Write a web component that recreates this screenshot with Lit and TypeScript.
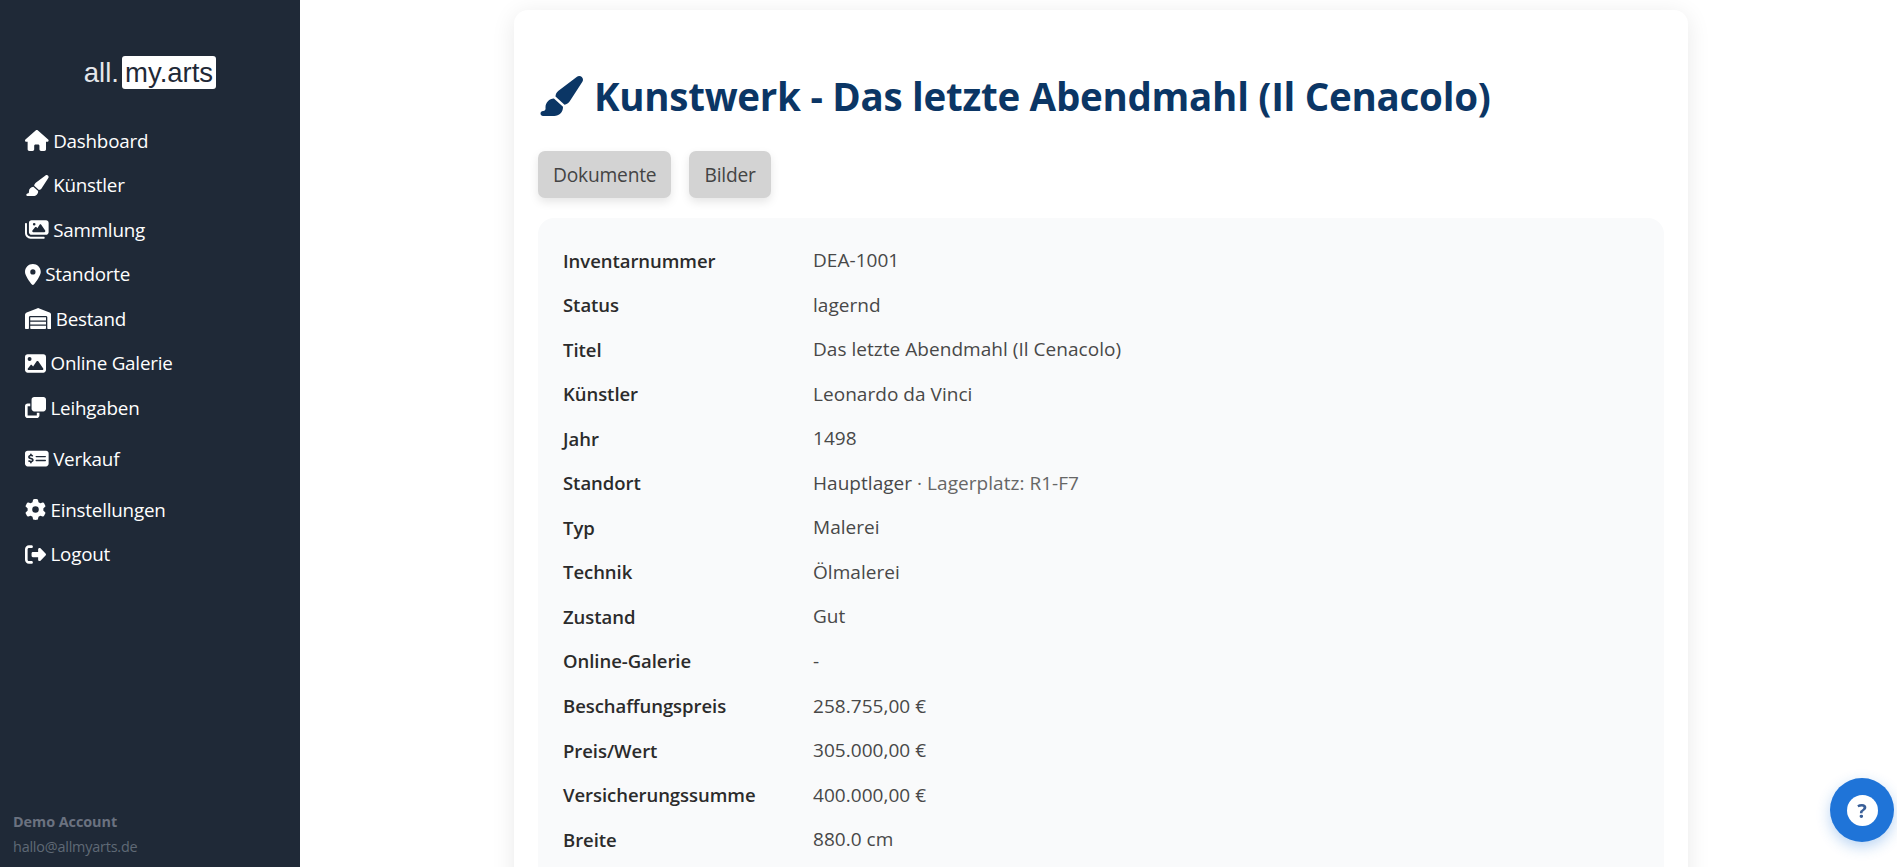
import { LitElement, html, css, svg } from "lit";
import { customElement } from "lit/decorators.js";

const I: Record<string, [number, string]> = {
  home: [576, "M575.8 255.5c0 18-15 32.1-32 32.1h-32l.7 160.2c0 2.7-.2 5.4-.5 8.1V472c0 22.1-17.9 40-40 40H456c-1.1 0-2.2 0-3.3-.1c-1.4 .1-2.8 .1-4.2 .1H416 392c-22.1 0-40-17.9-40-40V448 384c0-17.7-14.3-32-32-32H256c-17.7 0-32 14.3-32 32v64 24c0 22.1-17.9 40-40 40H160 128.1c-1.5 0-3-.1-4.5-.2c-1.2 .1-2.4 .2-3.6 .2H104c-22.1 0-40-17.9-40-40V360c0-.9 0-1.9 .1-2.8V287.6H32c-18 0-32-14-32-32.1c0-9 3-17 10-24L266.4 8c7-7 15-8 22-8s15 2 21 7L564.8 231.5c8 7 12 15 11 24z"],
  brush: [576, "M339.3 367.1c27.3-3.9 51.9-19.4 67.2-42.9L568.2 74.1c12.6-19.5 9.4-45.3-7.6-61.2S517.7-4.4 499.1 9.6L262.4 187.2c-24 18-38.2 46.1-38.4 76.1L339.3 367.1zm-19.6 25.4l-116-104.4C143.9 290.3 96 339.6 96 400c0 3.9 .2 7.8 .6 11.6C98.4 429.1 86.4 448 68.8 448H64c-17.7 0-32 14.3-32 32s14.3 32 32 32H208c61.9 0 112-50.1 112-112c0-2.5-.1-5-.2-7.5z"],
  images: [576, "M160 32c-35.3 0-64 28.7-64 64V320c0 35.3 28.7 64 64 64H512c35.3 0 64-28.7 64-64V96c0-35.3-28.7-64-64-64H160zM396 138.7l96 144c4.9 7.4 5.4 16.8 1.2 24.6S480.9 320 472 320H328 280 200c-9.2 0-17.6-5.3-21.6-13.6s-2.9-18.2 2.9-25.4l64-80c4.6-5.7 11.4-9 18.7-9s14.2 3.3 18.7 9l17.3 21.6 56-84C360.5 132 368 128 376 128s15.5 4 20 10.7zM192 128a32 32 0 1 1 64 0 32 32 0 1 1 -64 0zM48 120c0-13.3-10.7-24-24-24S0 106.7 0 120V344c0 75.1 60.9 136 136 136H456c13.3 0 24-10.7 24-24s-10.7-24-24-24H136c-48.6 0-88-39.4-88-88V120z"],
  marker: [384, "M215.7 499.2C267 435 384 279.4 384 192C384 86 298 0 192 0S0 86 0 192c0 87.4 117 243 168.3 307.2c12.3 15.3 35.1 15.3 47.4 0zM192 128a64 64 0 1 1 0 128 64 64 0 1 1 0-128z"],
  warehouse: [640, "M0 488V171.3c0-26.2 15.9-49.7 40.2-59.4L308.1 4.8c7.6-3.1 16.1-3.1 23.8 0L599.8 111.9c24.3 9.7 40.2 33.3 40.2 59.4V488c0 13.3-10.7 24-24 24H568c-13.3 0-24-10.7-24-24V224c0-17.7-14.3-32-32-32H128c-17.7 0-32 14.3-32 32V488c0 13.3-10.7 24-24 24H24c-13.3 0-24-10.7-24-24zm488 24H152c-13.3 0-24-10.7-24-24V432H512v56c0 13.3-10.7 24-24 24zM128 400V336H512v64H128zm0-96V224H512v80H128z"],
  image: [512, "M0 96C0 60.7 28.7 32 64 32H448c35.3 0 64 28.7 64 64V416c0 35.3-28.7 64-64 64H64c-35.3 0-64-28.7-64-64V96zM323.8 202.5c-4.5-6.6-11.9-10.5-19.8-10.5s-15.4 3.9-19.8 10.5l-87 127.6L170.7 297c-4.6-5.7-11.5-9-18.7-9s-14.2 3.3-18.7 9l-64 80c-5.8 7.2-6.9 17.1-2.9 25.4s12.4 13.6 21.6 13.6h96 32H424c8.9 0 17.1-4.9 21.2-12.8s3.6-17.4-1.4-24.7l-120-176zM112 192a48 48 0 1 0 0-96 48 48 0 1 0 0 96z"],
  clone: [512, "M288 448H64V224h64V160H64c-35.3 0-64 28.7-64 64V448c0 35.3 28.7 64 64 64H288c35.3 0 64-28.7 64-64V384H288v64zm-64-96H448c35.3 0 64-28.7 64-64V64c0-35.3-28.7-64-64-64H224c-35.3 0-64 28.7-64 64V288c0 35.3 28.7 64 64 64z"],
  money: [576, "M64 64C28.7 64 0 92.7 0 128V384c0 35.3 28.7 64 64 64H512c35.3 0 64-28.7 64-64V128c0-35.3-28.7-64-64-64H64zM272 192H496c8.8 0 16 7.2 16 16s-7.2 16-16 16H272c-8.8 0-16-7.2-16-16s7.2-16 16-16zM256 304c0-8.8 7.2-16 16-16H496c8.8 0 16 7.2 16 16s-7.2 16-16 16H272c-8.8 0-16-7.2-16-16zM164 152v13.9c7.5 1.2 14.6 2.9 21.1 4.7c10.7 2.8 17 13.8 14.2 24.5s-13.8 17-24.5 14.2c-11-2.9-21.6-5-31.2-5.2c-7.9-.1-16 1.8-21.5 5c-4.8 2.8-6.2 5.6-6.2 9.3c0 1.8 .1 3.5 5.3 6.7c6.3 3.8 15.5 6.7 28.3 10.5l.7 .2c11.2 3.4 25.6 7.7 37.1 15c12.9 8.1 24.3 21.3 24.6 41.6c.3 20.9-10.5 36.1-24.8 45c-7.2 4.5-15.2 7.3-23.2 9V360c0 11-9 20-20 20s-20-9-20-20V345.4c-10.3-2.2-20-5.5-28.2-8.4l0 0 0 0c-2.1-.7-4.1-1.4-6.1-2.1c-10.5-3.5-16.1-14.8-12.6-25.3s14.8-16.1 25.3-12.6c2.5 .8 4.9 1.7 7.2 2.4c13.6 4.6 24 8.1 35.1 8.5c8.6 .3 16.5-1.6 21.4-4.7c4.1-2.5 6-5.5 5.9-10.5c0-2.9-.8-5-5.9-8.2c-6.3-4-15.4-6.9-28-10.7l-1.7-.5c-10.9-3.3-24.6-7.4-35.6-14c-12.7-7.7-24.6-20.5-24.7-40.7c-.1-21.1 11.8-35.7 25.8-43.9c6.9-4.1 14.5-6.8 22.2-8.5V152c0-11 9-20 20-20s20 9 20 20z"],
  cog: [512, "M495.9 166.6c3.2 8.7 .5 18.4-6.4 24.6l-43.3 39.4c1.1 8.3 1.7 16.8 1.7 25.4s-.6 17.1-1.7 25.4l43.3 39.4c6.9 6.2 9.6 15.9 6.4 24.6c-4.4 11.9-9.7 23.3-15.8 34.3l-4.7 8.1c-6.6 11-14 21.4-22.1 31.2c-5.9 7.2-15.7 9.6-24.5 6.8l-55.7-17.7c-13.4 10.3-28.2 18.9-44 25.4l-12.5 57.1c-2 9.1-9 16.3-18.2 17.8c-13.8 2.3-28 3.5-42.5 3.5s-28.7-1.2-42.5-3.5c-9.2-1.5-16.2-8.7-18.2-17.8l-12.5-57.1c-15.8-6.5-30.6-15.1-44-25.4L83.1 425.9c-8.8 2.8-18.6 .3-24.5-6.8c-8.1-9.8-15.5-20.2-22.1-31.2l-4.7-8.1c-6.1-11-11.4-22.4-15.8-34.3c-3.2-8.7-.5-18.4 6.4-24.6l43.3-39.4C64.6 273.1 64 264.6 64 256s.6-17.1 1.7-25.4L22.4 191.2c-6.9-6.2-9.6-15.9-6.4-24.6c4.4-11.9 9.7-23.3 15.8-34.3l4.7-8.1c6.6-11 14-21.4 22.1-31.2c5.9-7.2 15.7-9.6 24.5-6.8l55.7 17.7c13.4-10.3 28.2-18.9 44-25.4l12.5-57.1c2-9.1 9-16.3 18.2-17.8C227.3 1.2 241.5 0 256 0s28.7 1.2 42.5 3.5c9.2 1.5 16.2 8.7 18.2 17.8l12.5 57.1c15.8 6.5 30.6 15.1 44 25.4l55.7-17.7c8.8-2.8 18.6-.3 24.5 6.8c8.1 9.8 15.5 20.2 22.1 31.2l4.7 8.1c6.1 11 11.4 22.4 15.8 34.3zM256 336a80 80 0 1 0 0-160 80 80 0 1 0 0 160z"],
  logout: [512, "M377.9 105.9L500.7 228.7c7.2 7.2 11.3 17.1 11.3 27.3s-4.1 20.1-11.3 27.3L377.9 406.1c-6.4 6.4-15 9.9-24 9.9c-18.7 0-33.9-15.2-33.9-33.9l0-62.1-128 0c-17.7 0-32-14.3-32-32l0-64c0-17.7 14.3-32 32-32l128 0 0-62.1c0-18.7 15.2-33.9 33.9-33.9c9 0 17.6 3.6 24 9.9zM160 96L96 96c-17.7 0-32 14.3-32 32l0 256c0 17.7 14.3 32 32 32l64 0c17.7 0 32 14.3 32 32s-14.3 32-32 32l-64 0c-53 0-96-43-96-96L0 128C0 75 43 32 96 32l64 0c17.7 0 32 14.3 32 32s-14.3 32-32 32z"],
};

const icon = (n: string) => {
  const [w, d] = I[n];
  return html`<svg class="ic" viewBox="0 0 ${w} 512" style="width:${(w / 512).toFixed(3)}em" aria-hidden="true">${svg`<path fill="currentColor" fill-rule="evenodd" d=${d}></path>`}</svg>`;
};

const NAV: [string, string, string][] = [
  ["home", "Dashboard", ""],
  ["brush", "Künstler", ""],
  ["images", "Sammlung", ""],
  ["marker", "Standorte", ""],
  ["warehouse", "Bestand", ""],
  ["image", "Online Galerie", ""],
  ["clone", "Leihgaben", ""],
  ["money", "Verkauf", "gap"],
  ["cog", "Einstellungen", "gap"],
  ["logout", "Logout", ""],
];

const ROWS: [string, unknown][] = [
  ["Inventarnummer", "DEA-1001"],
  ["Status", "lagernd"],
  ["Titel", "Das letzte Abendmahl (Il Cenacolo)"],
  ["Künstler", "Leonardo da Vinci"],
  ["Jahr", "1498"],
  ["Standort", html`Hauptlager <span class="muted">· Lagerplatz: R1-F7</span>`],
  ["Typ", "Malerei"],
  ["Technik", "Ölmalerei"],
  ["Zustand", "Gut"],
  ["Online-Galerie", "-"],
  ["Beschaffungspreis", "258.755,00 €"],
  ["Preis/Wert", "305.000,00 €"],
  ["Versicherungssumme", "400.000,00 €"],
  ["Breite", "880.0 cm"],
];

@customElement("app-root")
export class AppRoot extends LitElement {
  static styles = css`
    :host {
      display: block;
      height: 867px;
      overflow: hidden;
      background: #fff;
      font-family: "Open Sans", "Noto Sans", sans-serif;
    }
    .shell { display: flex; height: 867px; }
    .side {
      width: 300px;
      flex: none;
      box-sizing: border-box;
      background: #1f2937;
      color: #fff;
      display: flex;
      flex-direction: column;
    }
    .logo {
      margin-top: 56px;
      height: 33px;
      display: flex;
      justify-content: center;
      align-items: center;
      gap: 3px;
      font: 27.5px/33px "Liberation Sans", Arial, sans-serif;
      color: #e5e7eb;
    }
    .logo b {
      font-weight: 400;
      background: #fff;
      color: #1f2937;
      border-radius: 3px;
      padding: 0 3.1px;
    }
    nav { margin-top: 29.6px; padding-left: 25px; display: flex; flex-direction: column; }
    .item {
      height: 44.5px;
      display: flex;
      align-items: center;
      font-size: 18.8px;
      letter-spacing: -0.2px;
      gap: 4.5px;
    }
    .item.gap { margin-top: 6.5px; }
    .ic { height: 1em; font-size: 21px; flex: none; display: block; }
    .foot {
      margin-top: auto;
      padding: 0 0 8px 13px;
      color: #6b7280;
      line-height: 24.5px;
    }
    .foot strong { display: block; font-weight: 700; font-size: 14.4px; letter-spacing: -0.05px; }
    .foot span { display: block; font-size: 14.4px; letter-spacing: -0.2px; color: #5f6976; }
    main { flex: 1; min-width: 0; }
    .card {
      width: 1174px;
      box-sizing: border-box;
      margin: 10px 0 0 214px;
      height: 900px;
      padding: 0 24px;
      background: #fff;
      border-radius: 14px;
      box-shadow: 0 4px 24px rgba(0, 0, 0, 0.09);
    }
    h1 {
      margin: 0 0 10px;
      padding-top: 40px;
      height: 91px;
      box-sizing: content-box;
      display: flex;
      align-items: center;
      gap: 11px;
      font-size: 38.5px;
      font-weight: 700;
      letter-spacing: -0.27px;
      color: #0b3665;
    }
    h1 .ic { font-size: 40px; }
    .btns { display: flex; gap: 18px; margin: 0; height: 47px; }
    button {
      font: 400 19.2px "Open Sans", "Noto Sans", sans-serif;
      letter-spacing: -0.2px;
      color: #444;
      background: #d3d3d3;
      border: 0;
      border-radius: 7px;
      padding: 0 15px;
      box-shadow: 0 4px 10px rgba(0, 0, 0, 0.1);
    }
    .panel {
      margin-top: 20px;
      background: #f9fafb;
      border-radius: 16px;
      padding: 19.8px 25px;
      height: 800px;
    }
    .row {
      display: grid;
      grid-template-columns: 250px 1fr;
      height: 44.55px;
      align-items: center;
      font-size: 19px;
      letter-spacing: 0.04px;
      color: #484848;
    }
    .row .k { font-weight: 600; font-size: 18.5px; letter-spacing: -0.05px; color: #2b2b2b; }
    .muted { color: #666; }
    .help {
      position: fixed;
      right: 3px;
      bottom: 25px;
      width: 64px;
      height: 64px;
      border-radius: 50%;
      background: #1f74d8;
      box-shadow: 0 5px 14px rgba(31, 116, 216, 0.3);
      display: flex;
      align-items: center;
      justify-content: center;
    }
    .help span {
      width: 31px;
      height: 31px;
      border-radius: 50%;
      background: #fff;
      color: #3a5f98;
      font: 700 20px/31px "Open Sans", sans-serif;
      text-align: center;
    }
  `;

  render() {
    return html`<div class="shell">
      <aside class="side">
        <div class="logo"><span>all.</span><b>my.arts</b></div>
        <nav>
          ${NAV.map(([i, t, c]) => html`<div class="item ${c}">${icon(i)}<span>${t}</span></div>`)}
        </nav>
        <div class="foot"><strong>Demo Account</strong><span>hallo@allmyarts.de</span></div>
      </aside>
      <main>
        <section class="card">
          <h1>${icon("brush")}<span>Kunstwerk - Das letzte Abendmahl (Il Cenacolo)</span></h1>
          <div class="btns"><button>Dokumente</button><button>Bilder</button></div>
          <div class="panel">
            ${ROWS.map(([k, v]) => html`<div class="row"><div class="k">${k}</div><div>${v}</div></div>`)}
          </div>
        </section>
      </main>
      <div class="help"><span>?</span></div>
    </div>`;
  }
}
